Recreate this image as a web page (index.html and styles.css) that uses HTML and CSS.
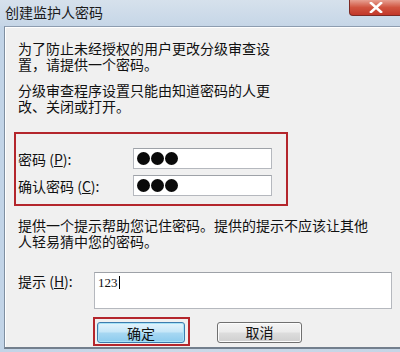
FILE: index.html
```html
<!DOCTYPE html>
<html lang="zh-CN">
<head>
<meta charset="utf-8">
<title>创建监护人密码</title>
<link rel="stylesheet" href="styles.css">
</head>
<body>
<div class="window">
  <div class="titlebar">
    <span class="title">创建监护人密码</span>
    <div class="close">
      <svg width="14" height="11" viewBox="0 0 14 11"><path d="M2 1 L12 10 M12 1 L2 10" stroke="#fff" stroke-width="2.6" stroke-linecap="square"/></svg>
    </div>
  </div>
  <div class="panel">
    <p class="para first">为了防止未经授权的用户更改分级审查设置，请提供一个密码。</p>
    <p class="para second">分级审查程序设置只能由知道密码的人更改、关闭或打开。</p>
    <div class="redbox">
      <div class="row">
        <span class="label">密码 (<u>P</u>):</span>
        <div class="field"><span class="dot"></span><span class="dot"></span><span class="dot"></span></div>
      </div>
      <div class="row">
        <span class="label">确认密码 (<u>C</u>):</span>
        <div class="field"><span class="dot"></span><span class="dot"></span><span class="dot"></span></div>
      </div>
    </div>
    <p class="para hint-text">提供一个提示帮助您记住密码。提供的提示不应该让其他人轻易猜中您的密码。</p>
    <div class="hint-row">
      <span class="label">提示 (<u>H</u>):</span>
      <div class="textarea">123<span class="caret"></span></div>
    </div>
    <div class="buttons">
      <div class="okwrap"><div class="btn ok">确定</div></div>
      <div class="btn cancel">取消</div>
    </div>
  </div>
</div>
</body>
</html>
```
FILE: styles.css
```css
html, body {
  margin: 0;
  padding: 0;
}
body {
  width: 400px;
  height: 352px;
  overflow: hidden;
  background: #c4d5e7;
  font-family: "Noto Sans CJK SC", "Microsoft YaHei", sans-serif;
  color: #111;
}
.window {
  width: 400px;
  height: 352px;
  display: flex;
  flex-direction: column;
  background: linear-gradient(to right, #c2d4e7, #cbd9e8 40%, #c5d5e6);
}
.titlebar {
  height: 26px;
  display: flex;
  align-items: flex-start;
  justify-content: space-between;
  background: linear-gradient(#d6e1ec, #c6d6e7);
}
.title {
  font-size: 14px;
  line-height: 16px;
  margin: 4px 0 0 5px;
  color: #1a1a1a;
}
.close {
  width: 54px;
  height: 16px;
  margin-right: -3px;
  border: 1px solid #7c2a24;
  border-top: none;
  border-radius: 0 0 0 4px;
  background: linear-gradient(#e7a092, #d0533f 50%, #c2382a);
  display: flex;
  align-items: center;
  justify-content: center;
  box-sizing: border-box;
}
.panel {
  margin-left: 4px;
  height: 320px;
  background: #f0f0f0;
  border-left: 1px solid #7f8fa1;
  border-top: 1px solid #8e9db0;
  border-bottom: 2px solid #737f8d;
  box-shadow: inset 1px 1px 0 #ffffff;
}
.para {
  margin: 0 0 0 13px;
  width: 256px;
  font-size: 14px;
  line-height: 16px;
}
.first {
  padding-top: 13px;
}
.second {
  margin-top: 10px;
}
.redbox {
  margin: 18px 0 0 9px;
  width: 268px;
  border: 2px solid #b4262c;
  padding: 14px 0 8px 2px;
  display: flex;
  flex-direction: column;
  gap: 6px;
}
.row {
  display: flex;
  align-items: center;
}
.label {
  font-size: 14px;
  line-height: 16px;
  white-space: nowrap;
}
.label u {
  text-decoration: underline;
  text-underline-offset: 1px;
}
.row .label {
  width: 115px;
}
.field {
  width: 139px;
  height: 21px;
  box-sizing: border-box;
  background: #fff;
  border: 1px solid #b5b8be;
  border-top-color: #9ea2a8;
  display: flex;
  align-items: center;
  gap: 1px;
  padding-left: 3px;
}
.dot {
  width: 13px;
  height: 13px;
  border-radius: 50%;
  background: #0a0a0a;
}
.hint-text {
  margin-top: 11px;
  width: 356px;
}
.hint-row {
  margin-top: 23px;
  padding-left: 13px;
  display: flex;
  align-items: flex-start;
}
.hint-row .label {
  width: 76px;
  margin-top: 1px;
}
.textarea {
  width: 298px;
  height: 37px;
  box-sizing: border-box;
  background: #fff;
  border: 1px solid #b5b8be;
  border-top-color: #9ea2a8;
  font-family: "Liberation Serif", serif;
  font-size: 13px;
  line-height: 13px;
  padding: 3px 0 0 3px;
  display: flex;
  align-items: flex-start;
}
.caret {
  display: inline-block;
  width: 1px;
  height: 13px;
  background: #000;
  margin-left: 1px;
}
.buttons {
  margin-top: 8px;
  padding-left: 88px;
  display: flex;
  align-items: center;
}
.okwrap {
  border: 2px solid #b4262c;
  padding: 3px 3px 1px 2px;
  display: flex;
}
.btn {
  height: 21px;
  box-sizing: border-box;
  display: flex;
  align-items: center;
  justify-content: center;
  font-size: 14px;
  border-radius: 3px;
}
.ok {
  width: 88px;
  border: 1px solid #3d7cae;
  background: linear-gradient(#e4f4fc, #c5e6f8 48%, #a8d8f2 52%, #8ccbee);
  box-shadow: inset 0 0 0 1px #a6e2f7;
}
.cancel {
  width: 85px;
  margin-left: 27px;
  margin-top: 1px;
  border: 1px solid #707070;
  background: linear-gradient(#f4f4f4, #ebebeb 48%, #dddddd 52%, #cfcfcf);
  box-shadow: inset 0 0 0 1px #fcfcfc;
}
```
